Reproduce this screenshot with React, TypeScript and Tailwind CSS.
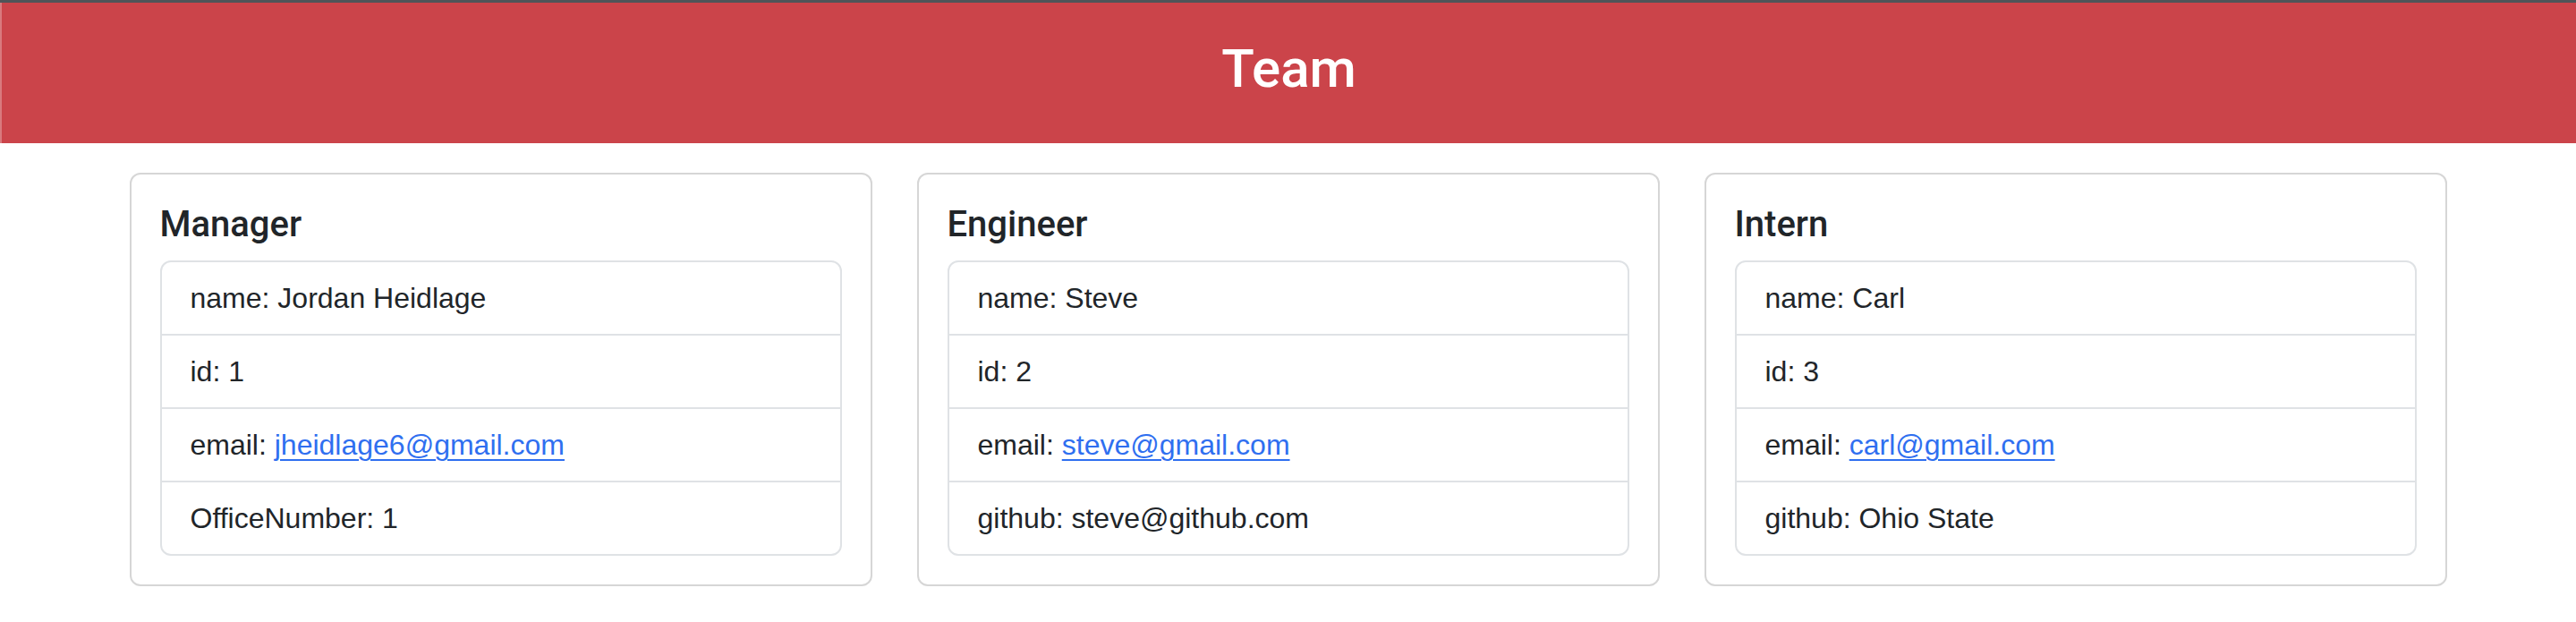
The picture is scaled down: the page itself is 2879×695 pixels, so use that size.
type Field = { label: string; value: string; link?: boolean };

type Member = { role: string; fields: Field[] };

const team: Member[] = [
  {
    role: 'Manager',
    fields: [
      { label: 'name', value: 'Jordan Heidlage' },
      { label: 'id', value: '1' },
      { label: 'email', value: 'jheidlage6@gmail.com', link: true },
      { label: 'OfficeNumber', value: '1' },
    ],
  },
  {
    role: 'Engineer',
    fields: [
      { label: 'name', value: 'Steve' },
      { label: 'id', value: '2' },
      { label: 'email', value: 'steve@gmail.com', link: true },
      { label: 'github', value: 'steve@github.com' },
    ],
  },
  {
    role: 'Intern',
    fields: [
      { label: 'name', value: 'Carl' },
      { label: 'id', value: '3' },
      { label: 'email', value: 'carl@gmail.com', link: true },
      { label: 'github', value: 'Ohio State' },
    ],
  },
];

function MemberCard({ member }: { member: Member }) {
  return (
    <div className="rounded-[12px] border-2 border-[#d6d6d6] bg-white p-8">
      <h5 className="mb-4 font-['Roboto',Arial,sans-serif] text-[40px] leading-[48px] font-medium text-[#212529]">
        {member.role}
      </h5>
      <ul className="overflow-hidden rounded-[12px] border-2 border-[#dfe2e5]">
        {member.fields.map((f, i) => (
          <li
            key={f.label}
            className={`px-8 py-4 text-[32px] leading-[48px] text-[#212529] ${i > 0 ? 'border-t-2 border-[#dfe2e5]' : ''}`}
          >
            {f.label}:{' '}
            {f.link ? (
              <a href={`mailto:${f.value}`} className="text-[#2f6ff0] underline decoration-2 underline-offset-[5px]">
                {f.value}
              </a>
            ) : (
              f.value
            )}
          </li>
        ))}
      </ul>
    </div>
  );
}

export default function App() {
  return (
    <div className="min-h-[695px] bg-white font-['Liberation_Sans',Arial,sans-serif]">
      <div className="h-[3px] bg-[#4f5458]" />
      <header className="border-l-2 border-[#d97a7e] bg-[#cb444a] pt-[38px] pb-[47px] text-center">
        <h1 className="font-['Roboto',Arial,sans-serif] text-[60px] leading-[72px] font-medium text-white">Team</h1>
      </header>
      <main className="mx-auto grid w-[2590px] grid-cols-3 gap-[50px] pt-[33px]">
        {team.map((m) => (
          <MemberCard key={m.role} member={m} />
        ))}
      </main>
    </div>
  );
}
